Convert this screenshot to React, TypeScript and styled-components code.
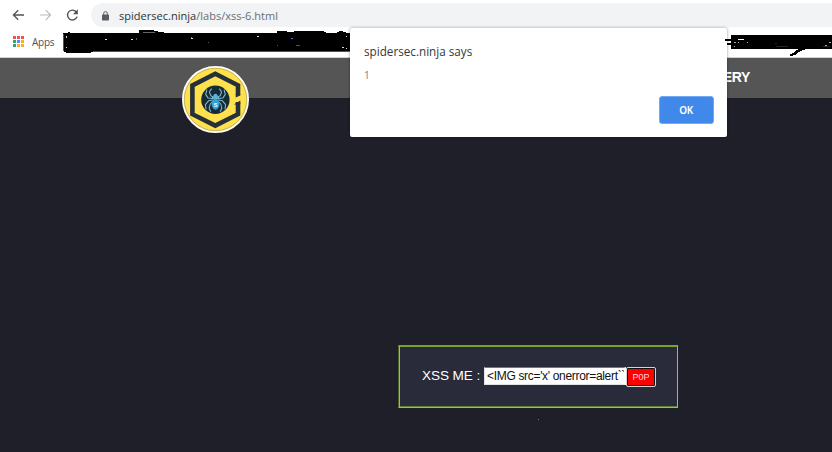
import React from "react";
import styled, { createGlobalStyle } from "styled-components";

const GlobalStyle = createGlobalStyle`
  * { box-sizing: border-box; }
  body { margin: 0; background: #1f1f2a; overflow: hidden; }
`;

const Screen = styled.div`
  position: relative;
  display: flex;
  flex-direction: column;
  width: 832px;
  height: 452px;
  overflow: hidden;
  background: #fff;
  font-family: "Open Sans", "Noto Sans", sans-serif;
`;

const Toolbar = styled.div`
  display: flex;
  align-items: center;
  height: 27px;
  margin-top: 3px;
  padding-left: 11px;
  flex: none;
`;

const NavButton = styled.span<{ $muted?: boolean }>`
  display: flex;
  width: 27px;
  height: 24px;
  flex: none;
  align-self: flex-start;
  align-items: center;
  color: ${(p) => (p.$muted ? "#b9bbbe" : "#505357")};
  svg { display: block; flex: none; }
`;

const AddressBar = styled.div`
  display: flex;
  align-items: center;
  align-self: flex-start;
  width: 760px;
  height: 24px;
  margin-left: -1px;
  padding: 1px 0 0 11px;
  border-radius: 12px 0 0 12px;
  background: #f1f3f4;
  flex: none;
`;

const Url = styled.span`
  margin-left: 10px;
  font-size: 11px;
  line-height: 16px;
  letter-spacing: 0.02px;
  white-space: nowrap;
  color: #6a6e73;
`;

const Domain = styled.span`
  color: #303236;
`;

const Bookmarks = styled.div`
  display: flex;
  align-items: center;
  height: 28px;
  padding-left: 13px;
  flex: none;
  border-bottom: 1px solid #d0d2d1;
`;

const AppsGrid = styled.div`
  display: grid;
  grid-template-columns: repeat(3, 3px);
  grid-auto-rows: 3px;
  gap: 1px;
  margin-top: -4px;
`;

const Dot = styled.i<{ $color: string }>`
  background: ${(p) => p.$color};
`;

const AppsLabel = styled.span`
  margin: -3px 0 0 8px;
  font-size: 10px;
  line-height: 14px;
  letter-spacing: -0.25px;
  color: #505357;
`;

const Scribble = styled.svg`
  position: absolute;
  left: 0;
  top: 24px;
`;

const SiteHeader = styled.header`
  display: flex;
  align-items: flex-start;
  height: 40px;
  padding: 8px 82px 0 182px;
  justify-content: space-between;
  background: #555;
  flex: none;
`;

const Logo = styled.svg`
  display: block;
  position: relative;
  flex: none;
`;

const NavLink = styled.span`
  margin-top: 2px;
  font: bold 14px/18px "Liberation Sans", Arial, sans-serif;
  letter-spacing: -0.35px;
  color: #fff;
`;

const Main = styled.main`
  display: flex;
  flex-direction: column;
  flex: 1;
  padding: 247px 0 0 398px;
  background: #1f1f2a;
`;

const Lab = styled.section`
  display: flex;
  align-items: center;
  width: 280px;
  height: 63px;
  padding: 0 0 1px 23px;
  border: 1px solid #98cc22;
  border-top-color: #79a328;
  border-left-color: #4c6324;
  box-shadow: inset 1px 0 #98cc22, inset 0 1px #79a328, inset 0 -1px #5f8030;
  background: #2a2b3a;
  font-family: "Liberation Sans", Arial, sans-serif;
`;

const LabLabel = styled.label`
  width: 62px;
  flex: none;
  margin-top: -1px;
  font-size: 13.6px;
  line-height: 16px;
  letter-spacing: -0.1px;
  white-space: nowrap;
  color: #fff;
`;

const Payload = styled.input`
  width: 142px;
  height: 18px;
  margin: 0;
  padding: 0 0 1px 2px;
  border: 1px solid #e3e3e3;
  border-top-color: #777;
  border-right: 2px solid #fff;
  border-radius: 0;
  outline: none;
  background: #fff;
  color: #111;
  font: 12px "Liberation Sans", Arial, sans-serif;
  letter-spacing: -0.32px;
`;

const PopButton = styled.button`
  width: 30px;
  height: 20px;
  margin-top: 1px;
  padding: 0;
  border: 1px solid #d5d5d5;
  border-radius: 2px;
  box-shadow: inset 0 0 0 1px #101010;
  background: #fe0000;
  color: #ffdada;
  font: 9px "Liberation Sans", Arial, sans-serif;
`;

const Speck = styled.i`
  width: 1px;
  height: 1px;
  margin: 11px 0 0 140px;
  background: #e0435c;
`;

const Dialog = styled.div`
  position: absolute;
  left: 350px;
  top: 28px;
  display: flex;
  flex-direction: column;
  width: 377px;
  height: 109px;
  padding: 15px 13px 13px 14px;
  border-radius: 2px;
  background: #fff;
  box-shadow: 0 0 3px rgba(0, 0, 0, 0.45);
`;

const DialogTitle = styled.div`
  font-size: 11.7px;
  line-height: 16px;
  color: #36383b;
`;

const DialogText = styled.div`
  margin-top: 9px;
  font-size: 10px;
  line-height: 14px;
  color: #777b80;
`;

const OkButton = styled.button`
  width: 55px;
  height: 28px;
  margin-top: auto;
  padding: 0 1px 0 0;
  align-self: flex-end;
  border: 1px solid #72a9f1;
  border-radius: 3px;
  background: #4089eb;
  color: #fff;
  font: 600 10px "Noto Sans", "Open Sans", sans-serif;
  letter-spacing: -0.3px;
`;

const dots = [
  "#ef5350", "#ef5350", "#ef5350",
  "#34a365", "#4b91ed", "#f4b128",
  "#34a365", "#f4b128", "#f4b128",
];

const Arrow = () => (
  <svg width="15" height="14" viewBox="0 0 15 14" fill="none" stroke="currentColor" strokeWidth="1.3">
    <path d="M13 7H2.5M7.2 2.2 2.4 7l4.8 4.8" />
  </svg>
);

const ForwardArrow = () => (
  <svg width="15" height="14" viewBox="0 0 15 14" fill="none" stroke="currentColor" strokeWidth="1.2">
    <path d="M2 7h10.5M7.8 2.2 12.6 7l-4.8 4.8" />
  </svg>
);

const Reload = () => (
  <svg width="15" height="14" viewBox="0 0 15 14" fill="none" stroke="currentColor" strokeWidth="1.4">
    <path d="M11.3 4A4.9 4.9 0 1 0 12.1 8.6" />
    <path d="M12.8 1.3v4.9H8z" fill="currentColor" stroke="none" />
  </svg>
);

const Lock = () => (
  <svg width="7" height="10" viewBox="0 0 7 10">
    <rect y="3.4" width="7" height="6" rx=".7" fill="#5a5d61" />
    <path d="M1.7 4V2.4a1.8 1.8 0 0 1 3.6 0V4" fill="none" stroke="#5a5d61" />
  </svg>
);

const SpiderLogo = () => (
  <Logo width="68" height="68" viewBox="0 0 68 68">
    <circle cx="33.5" cy="33.5" r="32.6" fill="#ffe14d" stroke="#fff" strokeWidth="1.8" />
    <circle cx="33.5" cy="33.5" r="31.2" fill="none" stroke="#a9a267" strokeWidth=".7" />
    <path
      d="M56 29V19.3L33.3 7.8 10.4 19.5v28.7l22.9 11.4L56 48.2V36"
      fill="none"
      stroke="#253138"
      strokeWidth="4.6"
    />
    <path d="M52.2 38.2 58.3 34.4V38.5H52.2zM53.7 28H58.3V29.5L53.7 31.5z" fill="#253138" />
    <circle cx="33.4" cy="33.7" r="14.2" fill="#172b36" />
    <g fill="none" stroke="#7dbbd2" strokeWidth="1.05" strokeLinejoin="round">
      <path d="M31.8 31.2 28.8 29.8 27.4 26 29.6 22.6M35.2 31.2 38.2 29.8 39.6 26 37.4 22.6" />
      <path d="M31.4 32.6 26 31.9 23.7 28.4 24.9 23.6M35.6 32.6 41 31.9 43.3 28.4 42.1 23.6" />
      <path d="M31.4 33.8 26.6 34.8 23.4 38.6 24 43.2M35.6 33.8 40.4 34.8 43.6 38.6 43 43.2" />
      <path d="M31 35.2 28.2 38 27.2 42.2 28.8 45.8M36 35.2 38.8 38 39.8 42.2 38.2 45.8" />
    </g>
    <path d="M30 31.8h7" stroke="#7dbbd2" strokeWidth="1.5" />
    <ellipse cx="33.5" cy="31" rx="2.2" ry="3.2" fill="#5eb4d8" />
    <ellipse cx="33.5" cy="38.3" rx="3.9" ry="5.4" fill="#33a1d5" />
    <text x="33.5" y="41" textAnchor="middle" fill="#e8faff" fontFamily="Liberation Sans, Arial, sans-serif" fontWeight="bold" fontSize="6.2">S</text>
  </Logo>
);

const Redactions = () => (
  <Scribble width="832" height="36" viewBox="0 0 832 36" shapeRendering="crispEdges">
    <path
      d="M63 9H68V8H70V9H139V6H154V7H158V8H164V9H277V7H287V8H294V7H324V8H326V9H337V8H339V7H343V8H346V9H350V27H93V28H91V29H66V28H64V27H63z"
      fill="#000"
    />
    <path d="M93 27.5H350M63.5 10V27" stroke="#555" />
    <path d="M143 8.5H155" stroke="#666" />
    <g fill="#d5dce6">
      <path d="M66 12h1v2h-1zM66 23h1v1h-1zM105 15h2v1h-2zM131 15h2v1h-2zM191 14h2v1h-2zM257 12h2v1h-2zM342 23h2v1h-2zM346 12h1v1h-1zM346 24h1v1h-1z" />
    </g>
    <path d="M191 13h1v1h-1zM291 14h2v1h-2z" fill="#537aca" />
    <path d="M208 18h1v1h-1zM277 21h1v1h-1zM296 21h4v1h-4zM136 14h1v2h-1z" fill="#555" />
    <path
      d="M725 15H731V11H832V25H807L803 26L799 28L795 31L790 32V30L793 29L796 26L800 25H731V21H727V19H731V17H725z"
      fill="#000"
    />
    <path d="M738 15h6v1h-6z" fill="#fff" />
    <path d="M734 18h2v1h-2zM738 18h1v1h-1zM747 18h1v1h-1zM734 22h1v1h-1zM825 21h2v1h-2zM829 18h2v1h-2z" fill="#9daab8" />
    <path d="M775 19h2v1h-2zM776 22h12v1h-12zM823 22h7v1h-7z" fill="#252525" />
  </Scribble>
);

export default function App() {
  return (
    <>
      <GlobalStyle />
      <Screen>
        <Toolbar>
          <NavButton><Arrow /></NavButton>
          <NavButton $muted><ForwardArrow /></NavButton>
          <NavButton><Reload /></NavButton>
          <AddressBar>
            <Lock />
            <Url><Domain>spidersec.ninja</Domain>/labs/xss-6.html</Url>
          </AddressBar>
        </Toolbar>
        <Bookmarks>
          <AppsGrid>{dots.map((color, i) => <Dot key={i} $color={color} />)}</AppsGrid>
          <AppsLabel>Apps</AppsLabel>
        </Bookmarks>
        <SiteHeader>
          <SpiderLogo />
          <NavLink>GALLERY</NavLink>
        </SiteHeader>
        <Main>
          <Lab>
            <LabLabel htmlFor="payload">XSS ME :</LabLabel>
            <Payload id="payload" readOnly value="<IMG src='x' onerror=alert``>" />
            <PopButton>P0P</PopButton>
          </Lab>
          <Speck />
        </Main>
        <Dialog>
          <DialogTitle>spidersec.ninja says</DialogTitle>
          <DialogText>1</DialogText>
          <OkButton>OK</OkButton>
        </Dialog>
        <Redactions />
      </Screen>
    </>
  );
}
